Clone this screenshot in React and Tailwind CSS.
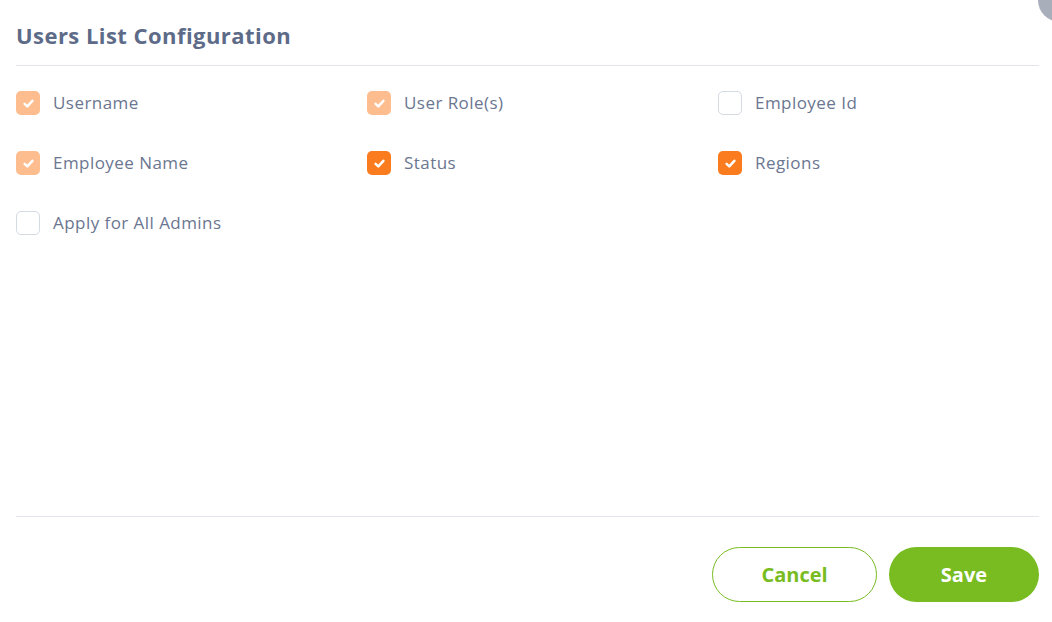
import React from "react";

const items = [
  { label: "Username", state: "disabled" },
  { label: "User Role(s)", state: "disabled" },
  { label: "Employee Id", state: "off" },
  { label: "Employee Name", state: "disabled" },
  { label: "Status", state: "on" },
  { label: "Regions", state: "on" },
  { label: "Apply for All Admins", state: "off" },
];

function Box({ state }) {
  if (state === "off") {
    return <span className="w-6 h-6 rounded-[5px] border border-[#d5d9e2] bg-white shrink-0" />;
  }
  const bg = state === "on" ? "bg-[#fb7b1f]" : "bg-[#fdbd8e]";
  return (
    <span className={`w-6 h-6 rounded-[5px] ${bg} flex items-center justify-center shrink-0`}>
      <svg width="13" height="13" viewBox="0 0 12 12" fill="none">
        <path d="M2.4 6.4 L4.9 8.7 L9.6 3.5" stroke="white" strokeWidth="2.3" strokeLinecap="round" strokeLinejoin="round" />
      </svg>
    </span>
  );
}

export default function App() {
  return (
    <div className="relative w-[1052px] h-[622px] bg-white overflow-hidden font-['Open_Sans','Noto_Sans',sans-serif]">
      {/* close button peeking at corner */}
      <div className="absolute -top-[22px] -right-[30px] w-[44px] h-[44px] rounded-full bg-[#a9aebb]" />

      <div className="pl-4 pr-[13px] flex flex-col h-full">
        <div className="h-[66px] flex items-center border-b border-[#e2e5ea] pt-[5px]">
          <h1 className="text-[22px] font-bold text-[#5d6b88] tracking-[0.45px]">Users List Configuration</h1>
        </div>

        <div className="grid grid-cols-[351px_351px_1fr] gap-y-9 pt-[25px] content-start flex-1">
          {items.map((it) => (
            <label key={it.label} className="flex items-center gap-[13px] h-6">
              <Box state={it.state} />
              <span className="text-[17px] tracking-[0.45px] text-[#6b7690]">{it.label}</span>
            </label>
          ))}
        </div>

        <div className="border-t border-[#e2e5ea] h-[106px] flex items-start justify-end gap-3 pt-[30px]">
          <button className="w-[165px] h-[55px] rounded-full border border-[#78bc22] text-[#78bc22] text-[20px] font-bold">
            Cancel
          </button>
          <button className="w-[150px] h-[55px] rounded-full bg-[#78bc22] text-white text-[20px] font-bold">
            Save
          </button>
        </div>
      </div>
    </div>
  );
}
